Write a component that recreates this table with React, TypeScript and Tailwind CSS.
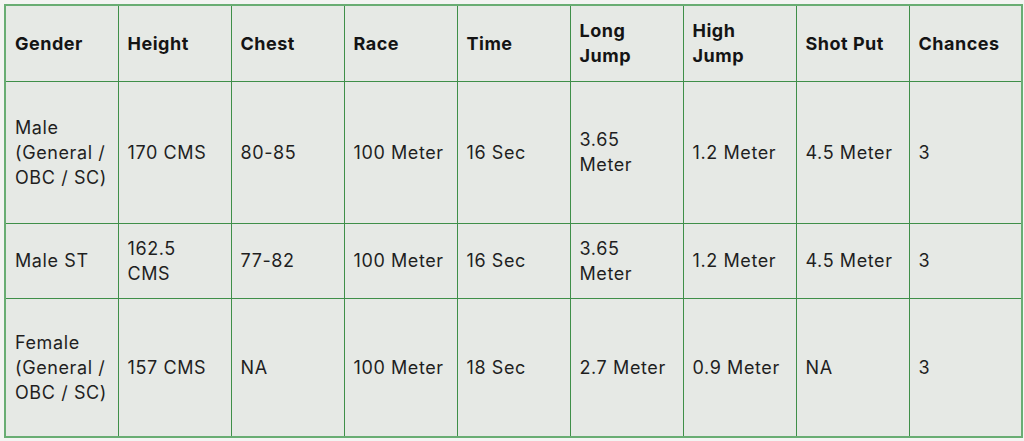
const headers = ['Gender', 'Height', 'Chest', 'Race', 'Time', 'Long Jump', 'High Jump', 'Shot Put', 'Chances']

const rows = [
  {
    h: 'h-[142px]',
    cells: ['Male (General / OBC / SC)', '170 CMS', '80-85', '100 Meter', '16 Sec', '3.65 Meter', '1.2 Meter', '4.5 Meter', '3'],
  },
  {
    h: 'h-[75px]',
    cells: ['Male ST', '162.5 CMS', '77-82', '100 Meter', '16 Sec', '3.65 Meter', '1.2 Meter', '4.5 Meter', '3'],
  },
  {
    h: 'h-[139px]',
    cells: ['Female (General / OBC / SC)', '157 CMS', 'NA', '100 Meter', '18 Sec', '2.7 Meter', '0.9 Meter', 'NA', '3'],
  },
]

export default function App() {
  return (
    <div className="w-[1024px] h-[441px] bg-[#f3f4f2] pt-[4px] pl-[4px] font-['Inter',sans-serif] text-[#1f1f1f]">
      <table className="table-fixed border-collapse w-[1018px] border-2 border-[#69ad73] bg-[#e6e9e5]">
        <colgroup>
          {headers.map((h) => (
            <col key={h} className="w-[113px]" />
          ))}
        </colgroup>
        <thead>
          <tr className="h-[76px]">
            {headers.map((h) => (
              <th
                key={h}
                className="border border-[#3f8f49] px-[9px] text-left align-middle text-[18px] leading-[25px] tracking-[0.5px] font-bold text-[#141414]"
              >
                {h}
              </th>
            ))}
          </tr>
        </thead>
        <tbody>
          {rows.map((r, i) => (
            <tr key={i} className={r.h}>
              {r.cells.map((c, j) => (
                <td
                  key={j}
                  className="border border-[#3f8f49] px-[9px] align-middle text-[18px] leading-[25px] tracking-[0.6px] font-normal"
                >
                  {c}
                </td>
              ))}
            </tr>
          ))}
        </tbody>
      </table>
    </div>
  )
}
